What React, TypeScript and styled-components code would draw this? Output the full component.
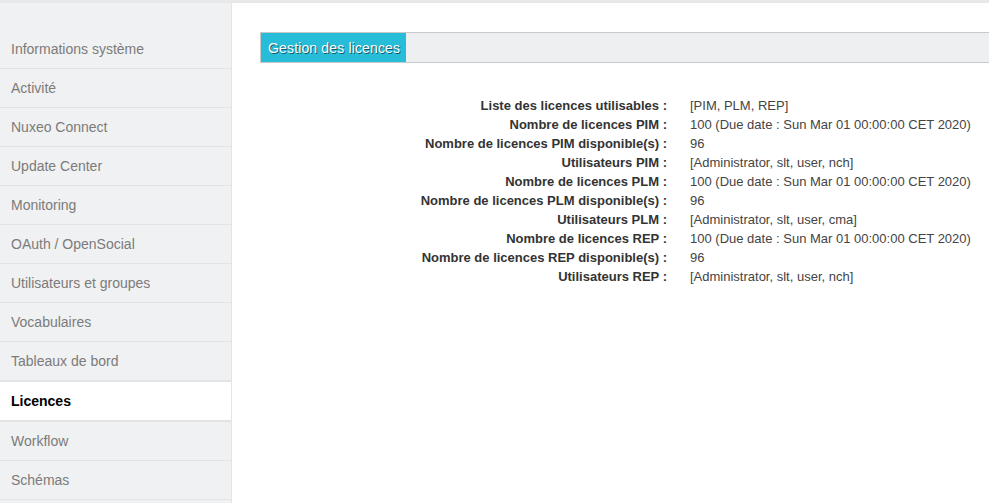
import React from "react";
import styled, { createGlobalStyle } from "styled-components";

const Global = createGlobalStyle`
  html, body { margin: 0; padding: 0; background: #fff; overflow: hidden; }
  body { font-family: "Liberation Sans", Arial, sans-serif; }
`;

const Page = styled.div`
  width: 989px;
  height: 503px;
  display: flex;
  flex-direction: column;
  overflow: hidden;
`;

const TopBand = styled.div`
  height: 3px;
  background: #e8e8e8;
  flex-shrink: 0;
`;

const Body = styled.div`
  flex: 1;
  display: flex;
  min-height: 0;
`;

const Sidebar = styled.nav`
  width: 231px;
  flex-shrink: 0;
  background: #f0f1f2;
  border-right: 1px solid #e3e4e6;
  padding-top: 27px;
  display: flex;
  flex-direction: column;
`;

const NavItem = styled.div<{ $active?: boolean }>`
  height: 38px;
  flex-shrink: 0;
  border-bottom: ${(p) => (p.$active ? "2px" : "1px")} solid #e1e3e5;
  ${(p) => (p.$active ? "border-top: 1px solid #e1e3e5;" : "")}
  background: ${(p) => (p.$active ? "#fff" : "transparent")};
  color: ${(p) => (p.$active ? "#000" : "#7b7b7b")};
  font-weight: ${(p) => (p.$active ? "bold" : "normal")};
  font-size: 14px;
  display: flex;
  align-items: center;
  padding-left: 11px;
`;

const Main = styled.main`
  flex: 1;
  padding: 29px 0 0 28px;
  min-width: 0;
`;

const HeaderBar = styled.div`
  height: 29px;
  border: 1px solid #c9c9c9;
  border-right: none;
  background: #eeeff0;
  display: flex;
`;

const Tab = styled.div`
  background: #27bcd8;
  color: #fff;
  font-size: 14px;
  padding: 0 6px 0 7px;
  display: flex;
  align-items: center;
  text-shadow: 1px 1px 0 rgba(0, 0, 0, 0.55);
  letter-spacing: 0.15px;
`;

const InfoGrid = styled.div`
  display: grid;
  grid-template-columns: 407px auto;
  column-gap: 23px;
  margin-top: 33px;
  font-size: 13px;
  line-height: 19px;
`;

const Label = styled.div`
  text-align: right;
  font-weight: bold;
  color: #333;
`;

const Value = styled.div`
  color: #444;
  white-space: nowrap;
`;

const navItems = [
  "Informations système",
  "Activité",
  "Nuxeo Connect",
  "Update Center",
  "Monitoring",
  "OAuth / OpenSocial",
  "Utilisateurs et groupes",
  "Vocabulaires",
  "Tableaux de bord",
  "Licences",
  "Workflow",
  "Schémas",
];

const due = "100 (Due date : Sun Mar 01 00:00:00 CET 2020)";

const rows: [string, string][] = [
  ["Liste des licences utilisables :", "[PIM, PLM, REP]"],
  ["Nombre de licences PIM :", due],
  ["Nombre de licences PIM disponible(s) :", "96"],
  ["Utilisateurs PIM :", "[Administrator, slt, user, nch]"],
  ["Nombre de licences PLM :", due],
  ["Nombre de licences PLM disponible(s) :", "96"],
  ["Utilisateurs PLM :", "[Administrator, slt, user, cma]"],
  ["Nombre de licences REP :", due],
  ["Nombre de licences REP disponible(s) :", "96"],
  ["Utilisateurs REP :", "[Administrator, slt, user, nch]"],
];

export default function App() {
  return (
    <Page>
      <Global />
      <TopBand />
      <Body>
        <Sidebar>
          {navItems.map((n) => (
            <NavItem key={n} $active={n === "Licences"}>
              {n}
            </NavItem>
          ))}
        </Sidebar>
        <Main>
          <HeaderBar>
            <Tab>Gestion des licences</Tab>
          </HeaderBar>
          <InfoGrid>
            {rows.map(([l, v], i) => (
              <React.Fragment key={i}>
                <Label>{l}</Label>
                <Value>{v}</Value>
              </React.Fragment>
            ))}
          </InfoGrid>
        </Main>
      </Body>
    </Page>
  );
}
